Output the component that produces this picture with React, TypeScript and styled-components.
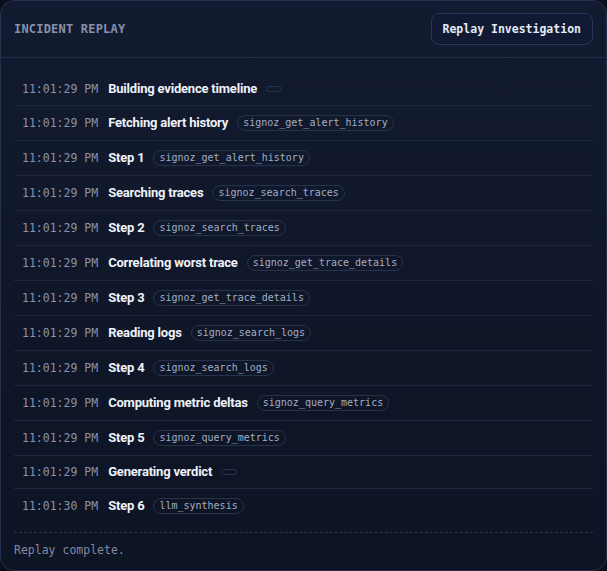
import React from "react";
import styled, {createGlobalStyle} from "styled-components";

interface IEvent {
    time: string;
    title: string;
    tool: string;
}

const events: IEvent[] = [
    {time: "11:01:29 PM", title: "Building evidence timeline", tool: ""},
    {time: "11:01:29 PM", title: "Fetching alert history", tool: "signoz_get_alert_history"},
    {time: "11:01:29 PM", title: "Step 1", tool: "signoz_get_alert_history"},
    {time: "11:01:29 PM", title: "Searching traces", tool: "signoz_search_traces"},
    {time: "11:01:29 PM", title: "Step 2", tool: "signoz_search_traces"},
    {time: "11:01:29 PM", title: "Correlating worst trace", tool: "signoz_get_trace_details"},
    {time: "11:01:29 PM", title: "Step 3", tool: "signoz_get_trace_details"},
    {time: "11:01:29 PM", title: "Reading logs", tool: "signoz_search_logs"},
    {time: "11:01:29 PM", title: "Step 4", tool: "signoz_search_logs"},
    {time: "11:01:29 PM", title: "Computing metric deltas", tool: "signoz_query_metrics"},
    {time: "11:01:29 PM", title: "Step 5", tool: "signoz_query_metrics"},
    {time: "11:01:29 PM", title: "Generating verdict", tool: ""},
    {time: "11:01:30 PM", title: "Step 6", tool: "llm_synthesis"},
];

const App = () => {
    return (
        <>
            <GlobalStyle/>
            <Panel>
                <Header>
                    <Label>INCIDENT REPLAY</Label>
                    <ReplayButton type="button">Replay Investigation</ReplayButton>
                </Header>
                <Timeline>
                    {events.map((ev, i) => (
                        <Row key={i}>
                            <Time>{ev.time}</Time>
                            <Title>{ev.title}</Title>
                            <Tool>{ev.tool}</Tool>
                        </Row>
                    ))}
                </Timeline>
                <Footer>Replay complete.</Footer>
            </Panel>
        </>
    );
};

export default App;

const GlobalStyle = createGlobalStyle`
  html, body {
    margin: 0;
    padding: 0;
    background: #0a0f1c;
  }
`;

const mono = `"DejaVu Sans Mono", "Liberation Mono", monospace`;

const Panel = styled.div`
  box-sizing: border-box;
  width: 607px;
  height: 571px;
  border: 1px solid #26314d;
  border-radius: 14px;
  overflow: hidden;
  background: linear-gradient(180deg, #131b30 0%, #0f1628 60%, #0d1424 100%);
  display: flex;
  flex-direction: column;
`;

const Header = styled.div`
  display: flex;
  align-items: center;
  justify-content: space-between;
  padding: 12px 13px;
  border-bottom: 1px solid #232e4b;
`;

const Label = styled.div`
  font-family: ${mono};
  font-size: 12px;
  font-weight: 700;
  letter-spacing: 0.2px;
  color: #8791ab;
`;

const ReplayButton = styled.button`
  height: 32px;
  padding: 0 11px;
  border: 1px solid #2a3657;
  border-radius: 8px;
  background: #111a32;
  color: #e3eaf6;
  font-family: ${mono};
  font-size: 11.5px;
  font-weight: 700;
  cursor: pointer;
`;

const Timeline = styled.div`
  display: flex;
  flex-direction: column;
  padding: 15px 13px 0 13px;
`;

const Row = styled.div`
  display: flex;
  align-items: center;
  padding: 9px 8px;
  border-bottom: 1px solid #1d2740;

  &:last-child {
    border-bottom: none;
  }
`;

const Time = styled.span`
  font-family: ${mono};
  font-size: 11.5px;
  color: #8993aa;
  margin-right: 10px;
  white-space: nowrap;
`;

const Title = styled.span`
  font-family: Roboto, "Noto Sans", sans-serif;
  font-size: 13px;
  font-weight: 700;
  line-height: 14px;
  letter-spacing: -0.2px;
  color: #eef2f9;
  margin-right: 9px;
`;

const Tool = styled.span`
  display: inline-block;
  min-width: 4px;
  padding: 0 5px;
  border: 1px solid #27324d;
  border-radius: 999px;
  font-family: ${mono};
  font-size: 10px;
  line-height: 14px;
  color: #a3aec6;

  &:empty {
    height: 4px;
    line-height: 4px;
  }
`;

const Footer = styled.div`
  margin: 9px 13px 0 13px;
  padding-top: 10px;
  border-top: 1px dashed #2a3550;
  font-family: ${mono};
  font-size: 11.5px;
  color: #7f8aa3;
`;
